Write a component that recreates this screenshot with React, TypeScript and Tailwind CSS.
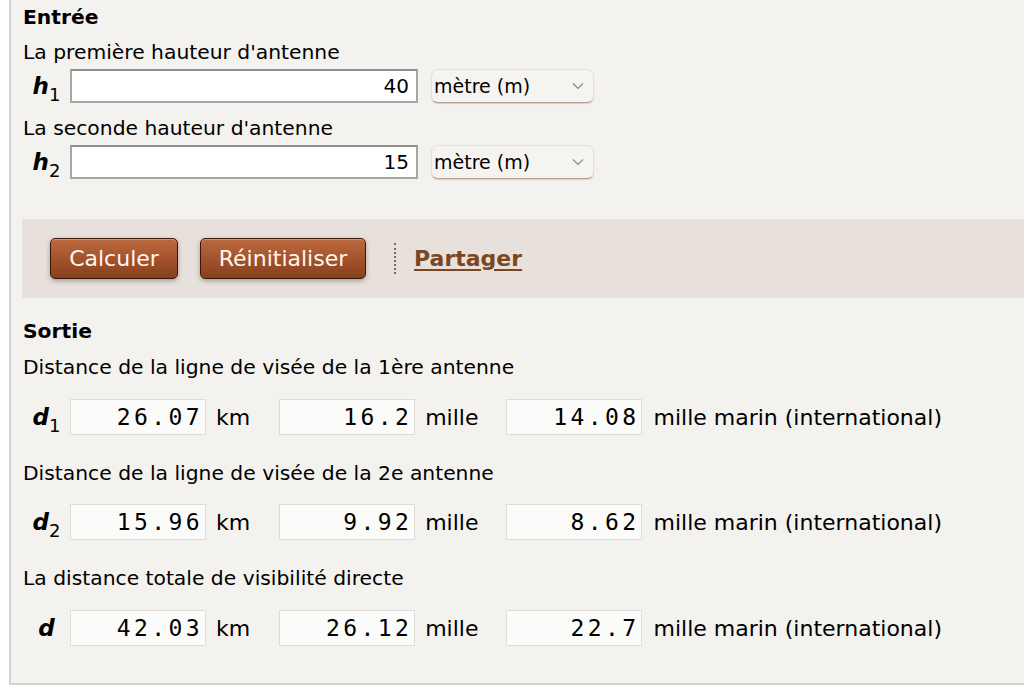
import React from 'react';

const sans = { fontFamily: '"DejaVu Sans", Verdana, sans-serif' };

const Sym: React.FC<{ letter: string; sub?: string }> = ({ letter, sub }) => (
  <div className="w-[47px] shrink-0 text-center leading-none text-black">
    <span className="text-[23px] font-bold italic">{letter}</span>
    {sub && <sub className="text-[18px] align-[-3px]">{sub}</sub>}
  </div>
);

const UnitSelect: React.FC = () => (
  <div className="ml-[13px] flex h-[34px] w-[163px] items-center justify-between rounded-[7px] border border-[#e4e1dc] border-b-[#b8a494] bg-[#f6f4f1] pl-[2px] pr-[9px] shadow-[0_1px_1px_rgba(120,90,60,0.25)]">
    <span className="text-[19px] text-black">mètre (m)</span>
    <svg width="12" height="8" viewBox="0 0 12 8" fill="none">
      <path d="M1 1.5 6 6.5 11 1.5" stroke="#8a8a8a" strokeWidth="1.2" />
    </svg>
  </div>
);

const InputRow: React.FC<{ sub: string; value: string }> = ({ sub, value }) => (
  <div className="flex items-center">
    <Sym letter="h" sub={sub} />
    <div className="flex h-[34px] w-[348px] items-center justify-end border-2 border-[#a6a6a6] border-t-[#8e8e8e] bg-white pr-[7px] text-[20px] text-black">
      {value}
    </div>
    <UnitSelect />
  </div>
);

const OutBox: React.FC<{ value: string; ml?: string }> = ({ value, ml = '' }) => (
  <div
    className={`flex h-[36px] w-[136px] items-center justify-end border border-[#dedcd6] bg-[#fbfbfa] pr-[2px] text-[23px] tracking-[3.4px] text-black ${ml}`}
    style={{ fontFamily: '"DejaVu Sans Mono", Menlo, monospace' }}
  >
    {value}
  </div>
);

const OutputRow: React.FC<{ sub?: string; vals: string[] }> = ({ sub, vals }) => (
  <div className="flex items-center text-[22px] text-black">
    <Sym letter="d" sub={sub} />
    <OutBox value={vals[0]} />
    <span className="ml-[10px]">km</span>
    <OutBox value={vals[1]} ml="ml-[29px]" />
    <span className="ml-[10px]">mille</span>
    <OutBox value={vals[2]} ml="ml-[28px]" />
    <span className="ml-[11px]">mille marin (international)</span>
  </div>
);

const Btn: React.FC<{ label: string; w: string }> = ({ label, w }) => (
  <button
    className={`${w} h-[41px] rounded-[5px] border border-[#3e1608] bg-gradient-to-b from-[#bb6a3f] via-[#a5532c] to-[#86401f] text-[22px] text-[#fff8ee] shadow-[0_2px_5px_rgba(0,0,0,0.3),inset_0_1px_0_rgba(255,200,160,0.45)]`}
    style={sans}
  >
    {label}
  </button>
);

export default function App() {
  return (
    <div className="h-[696px] w-[1024px] overflow-hidden bg-white" style={sans}>
      <div className="ml-[9px] h-[685px] border-b-2 border-l-2 border-[#d2d2ca] bg-[#f4f2ee] pt-[5px]">
        <div className="pl-[12px] text-[20.3px]">
          <div className="h-6 font-bold leading-6 text-black">Entrée</div>
          <div className="mt-[11px] h-6 leading-6 text-black">La première hauteur d'antenne</div>
          <div className="mt-[5px]">
            <InputRow sub="1" value="40" />
          </div>
          <div className="mt-[13px] h-6 leading-6 text-black">La seconde hauteur d'antenne</div>
          <div className="mt-[5px]">
            <InputRow sub="2" value="15" />
          </div>
        </div>

        {/* Barre d'actions */}
        <div className="ml-[11px] mt-[40px] flex h-[79px] items-center bg-[#e8e1db] pl-[28px]">
          <Btn label="Calculer" w="w-[128px]" />
          <div className="ml-[22px]">
            <Btn label="Réinitialiser" w="w-[166px]" />
          </div>
          <div className="ml-[28px] h-[31px] border-l-2 border-dotted border-[#6f6f6f]" />
          <a href="#" className="ml-[18px] text-[22px] font-bold text-[#7b4722] underline decoration-2 underline-offset-[3px]">
            Partager
          </a>
        </div>

        <div className="pl-[12px] text-[20.3px]">
          <div className="mt-[21px] h-6 font-bold leading-6 text-black">Sortie</div>
          <div className="mt-[12px] h-6 leading-6 text-black">Distance de la ligne de visée de la 1ère antenne</div>
          <div className="mt-[20px]">
            <OutputRow sub="1" vals={['26.07', '16.2', '14.08']} />
          </div>
          <div className="mt-[26px] h-6 leading-6 text-black">Distance de la ligne de visée de la 2e antenne</div>
          <div className="mt-[19px]">
            <OutputRow sub="2" vals={['15.96', '9.92', '8.62']} />
          </div>
          <div className="mt-[26px] h-6 leading-6 text-black">La distance totale de visibilité directe</div>
          <div className="mt-[20px]">
            <OutputRow vals={['42.03', '26.12', '22.7']} />
          </div>
        </div>
      </div>
    </div>
  );
}
